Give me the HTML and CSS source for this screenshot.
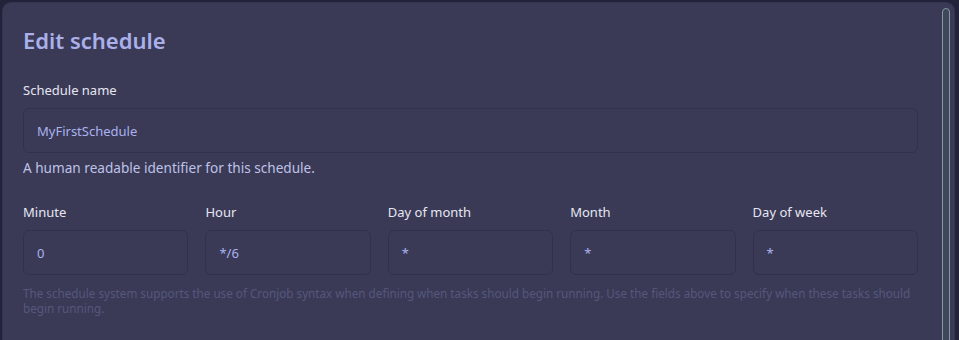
FILE: index.html
```html
<!DOCTYPE html>
<html>
<head>
<meta charset="utf-8">
<link rel="stylesheet" href="styles.css">
</head>
<body>
<div class="card">
  <div class="content">
    <h1 class="title">Edit schedule</h1>
    <div class="field">
      <label class="label">Schedule name</label>
      <div class="input">MyFirstSchedule</div>
      <p class="help">A human readable identifier for this schedule.</p>
    </div>
    <div class="cron">
      <div class="col"><label class="label">Minute</label><div class="input">0</div></div>
      <div class="col"><label class="label">Hour</label><div class="input">*/6</div></div>
      <div class="col"><label class="label">Day of month</label><div class="input">*</div></div>
      <div class="col"><label class="label">Month</label><div class="input">*</div></div>
      <div class="col"><label class="label">Day of week</label><div class="input">*</div></div>
    </div>
    <p class="note">The schedule system supports the use of Cronjob syntax when defining when tasks should begin running. Use the fields above to specify when these tasks should begin running.</p>
  </div>
  <div class="gutter"><div class="thumb"></div></div>
</div>
</body>
</html>
```
FILE: styles.css
```css
html, body {
  margin: 0;
  height: 100%;
  overflow: hidden;
}
body {
  background: #22223a;
  padding: 3px 5px 0 3px;
  box-sizing: border-box;
  font-family: "Noto Sans", "Open Sans", sans-serif;
}
.card {
  display: flex;
  background: #3a3a56;
  border-radius: 8px 8px 0 0;
  height: 400px;
  box-shadow: 0 0 0 1px #34344e;
}
.content {
  flex: 1;
  padding: 22px 20px 20px 20px;
}
.gutter {
  width: 16px;
  flex: none;
  padding: 5px 4px 0 4px;
  box-sizing: border-box;
}
.thumb {
  height: 100%;
  border: 1px solid #8797a4;
  background: #3e4858;
  border-radius: 4px 4px 0 0;
  box-sizing: border-box;
}
.title {
  margin: 0 0 26px;
  font-size: 22px;
  line-height: 30px;
  font-weight: 600;
  color: #aab0ea;
}
.label {
  display: block;
  font-size: 13px;
  line-height: 18px;
  color: #e6e6f2;
  margin-bottom: 9px;
}
.input {
  height: 45px;
  box-sizing: border-box;
  border: 1px solid #31314b;
  border-radius: 6px;
  padding: 0 13px;
  display: flex;
  align-items: center;
  font-size: 13px;
  color: #aab2f0;
}
.help {
  margin: 6px 0 0;
  font-size: 13.6px;
  line-height: 18px;
  color: #bfc2e6;
}
.cron {
  display: grid;
  grid-template-columns: repeat(5, 1fr);
  column-gap: 17px;
  margin-top: 26px;
}
.note {
  margin: 11px 0 0;
  font-size: 11.7px;
  line-height: 15px;
  color: #56577c;
}
```
